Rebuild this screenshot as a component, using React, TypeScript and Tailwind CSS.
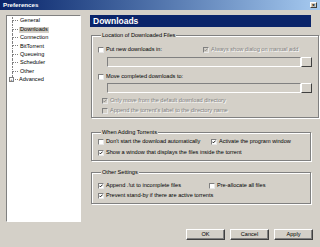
import React from 'react'

const font = { fontFamily: '"Liberation Sans", Arial, sans-serif' }

function Check({ checked, disabled }: { checked?: boolean; disabled?: boolean }) {
  return (
    <span
      className={`inline-flex h-[6px] w-[6px] shrink-0 items-center justify-center border border-t-[#808080] border-l-[#808080] border-r-[#e8e8e8] border-b-[#e8e8e8] ${
        disabled ? 'bg-[#d4d0c8]' : 'bg-white'
      }`}
    >
      {checked && (
        <svg width="4" height="4" viewBox="0 0 7 7" className="block">
          <path d="M0.5 3 L2.5 5 L6.5 1" fill="none" stroke={disabled ? '#808080' : '#000'} strokeWidth="1.6" />
        </svg>
      )}
    </span>
  )
}

function Opt({
  label,
  checked,
  disabled,
  className = '',
}: {
  label: string
  checked?: boolean
  disabled?: boolean
  className?: string
}) {
  return (
    <div className={`flex h-[6px] items-center gap-[2px] ${className}`}>
      <Check checked={checked} disabled={disabled} />
      <span
        className={`whitespace-nowrap leading-none ${
          disabled ? 'text-[#808080] [text-shadow:1px_1px_0_#fff]' : 'text-black'
        }`}
      >
        {label}
      </span>
    </div>
  )
}

function PathField() {
  return (
    <div className="ml-[9px] flex h-[10px] items-stretch">
      <div className="w-[194px] border border-t-[#808080] border-l-[#808080] border-r-white border-b-white bg-[#d4d0c8]" />
      <div className="w-[11px] border border-t-white border-l-white border-r-[#404040] border-b-[#404040] bg-[#d4d0c8]" />
    </div>
  )
}

function Group({ title, className = '', children }: { title: string; className?: string; children: React.ReactNode }) {
  return (
    <fieldset
      className={`ml-[1px] w-[220px] border border-[#808080] px-[6px] shadow-[inset_1px_1px_0_#fff,1px_1px_0_#fff] ${className}`}
    >
      <legend className="ml-[3px] bg-[#d4d0c8] px-[1px] leading-none">{title}</legend>
      {children}
    </fieldset>
  )
}

const treeItems = ['General', 'Downloads', 'Connection', 'BitTorrent', 'Queueing', 'Scheduler', 'Other', 'Advanced']

function Tree() {
  return (
    <div className="ml-[6px] h-[207px] w-[75px] border border-t-[#808080] border-l-[#808080] border-r-white border-b-white bg-white pt-[1px]">
      {treeItems.map((item, i) => {
        const last = i === treeItems.length - 1
        return (
          <div key={item} className="flex h-[8.4px] items-stretch">
            <div className="ml-[5px] flex w-[6px] flex-col">
              <div className="h-1/2 border-b border-l border-dotted border-[#808080]" />
              <div className={`h-1/2 ${last ? '' : 'border-l border-dotted border-[#808080]'}`} />
            </div>
            {last ? (
              <span className="relative -ml-[9px] mr-[3px] flex h-[5px] w-[5px] self-center items-center justify-center border border-[#808080] bg-white text-[4px] leading-none">
                +
              </span>
            ) : null}
            <span
              className={`ml-[1px] flex items-center self-center px-[1px] leading-none h-[6px] ${
                item === 'Downloads' ? 'bg-[#d4d0c8]' : ''
              }`}
            >
              {item}
            </span>
          </div>
        )
      })}
    </div>
  )
}

function Btn({ label }: { label: string }) {
  return (
    <div className="flex h-[11px] w-[39px] items-center justify-center border border-t-white border-l-white border-r-[#404040] border-b-[#404040] bg-[#d4d0c8] leading-none shadow-[inset_-1px_-1px_0_#808080]">
      {label}
    </div>
  )
}

export default function App() {
  return (
    <div className="h-[247px] w-[320px] overflow-hidden bg-[#d4d0c8] text-[5.6px] text-black" style={font}>
      {/* Title bar */}
      <div className="flex h-[10px] items-center justify-between bg-gradient-to-r from-[#0a246a] to-[#a6caf0] pl-[3px] pr-[3px]">
        <span className="text-[6.2px] font-bold leading-none text-white">Preferences</span>
        <span className="flex h-[6px] w-[7px] items-center justify-center border border-t-white border-l-white border-r-[#404040] border-b-[#404040] bg-[#d4d0c8] text-[5px] font-bold leading-none">
          ×
        </span>
      </div>

      <div className="mt-[5px] flex">
        <Tree />

        {/* Right panel */}
        <div className="ml-[9px] w-[221px]">
          <div className="flex h-[12px] items-center bg-[#0a246a] pl-[3px] text-[8.5px] font-bold leading-none text-white">
            Downloads
          </div>

          <Group title="Location of Downloaded Files" className="mt-[6px] h-[85px] pt-[8px]">
            <div className="flex">
              <Opt label="Put new downloads in:" />
              <Opt label="Always show dialog on manual add" checked disabled className="ml-[41px]" />
            </div>
            <div className="mt-[4px]">
              <PathField />
            </div>
            <Opt label="Move completed downloads to:" className="mt-[7px]" />
            <div className="mt-[3px]">
              <PathField />
            </div>
            <Opt label="Only move from the default download directory" checked disabled className="ml-[4px] mt-[5px]" />
            <Opt label="Append the torrent's label to the directory name" disabled className="ml-[4px] mt-[4px]" />
          </Group>

          <Group title="When Adding Torrents" className="mt-[12px] h-[31px] pt-[3px]">
            <div className="flex">
              <Opt label="Don't start the download automatically" className="w-[113px]" />
              <Opt label="Activate the program window" checked />
            </div>
            <Opt label="Show a window that displays the files inside the torrent" checked className="mt-[5px]" />
          </Group>

          <Group title="Other Settings" className="mt-[9px] h-[34px] pt-[7px]">
            <div className="flex">
              <Opt label="Append .!ut to incomplete files" checked className="w-[111px]" />
              <Opt label="Pre-allocate all files" />
            </div>
            <Opt label="Prevent stand-by if there are active torrents" checked className="mt-[4px]" />
          </Group>
        </div>
      </div>

      <div className="mt-[7px] flex justify-end gap-[5px] pr-[7px]">
        <Btn label="OK" />
        <Btn label="Cancel" />
        <Btn label="Apply" />
      </div>
    </div>
  )
}
